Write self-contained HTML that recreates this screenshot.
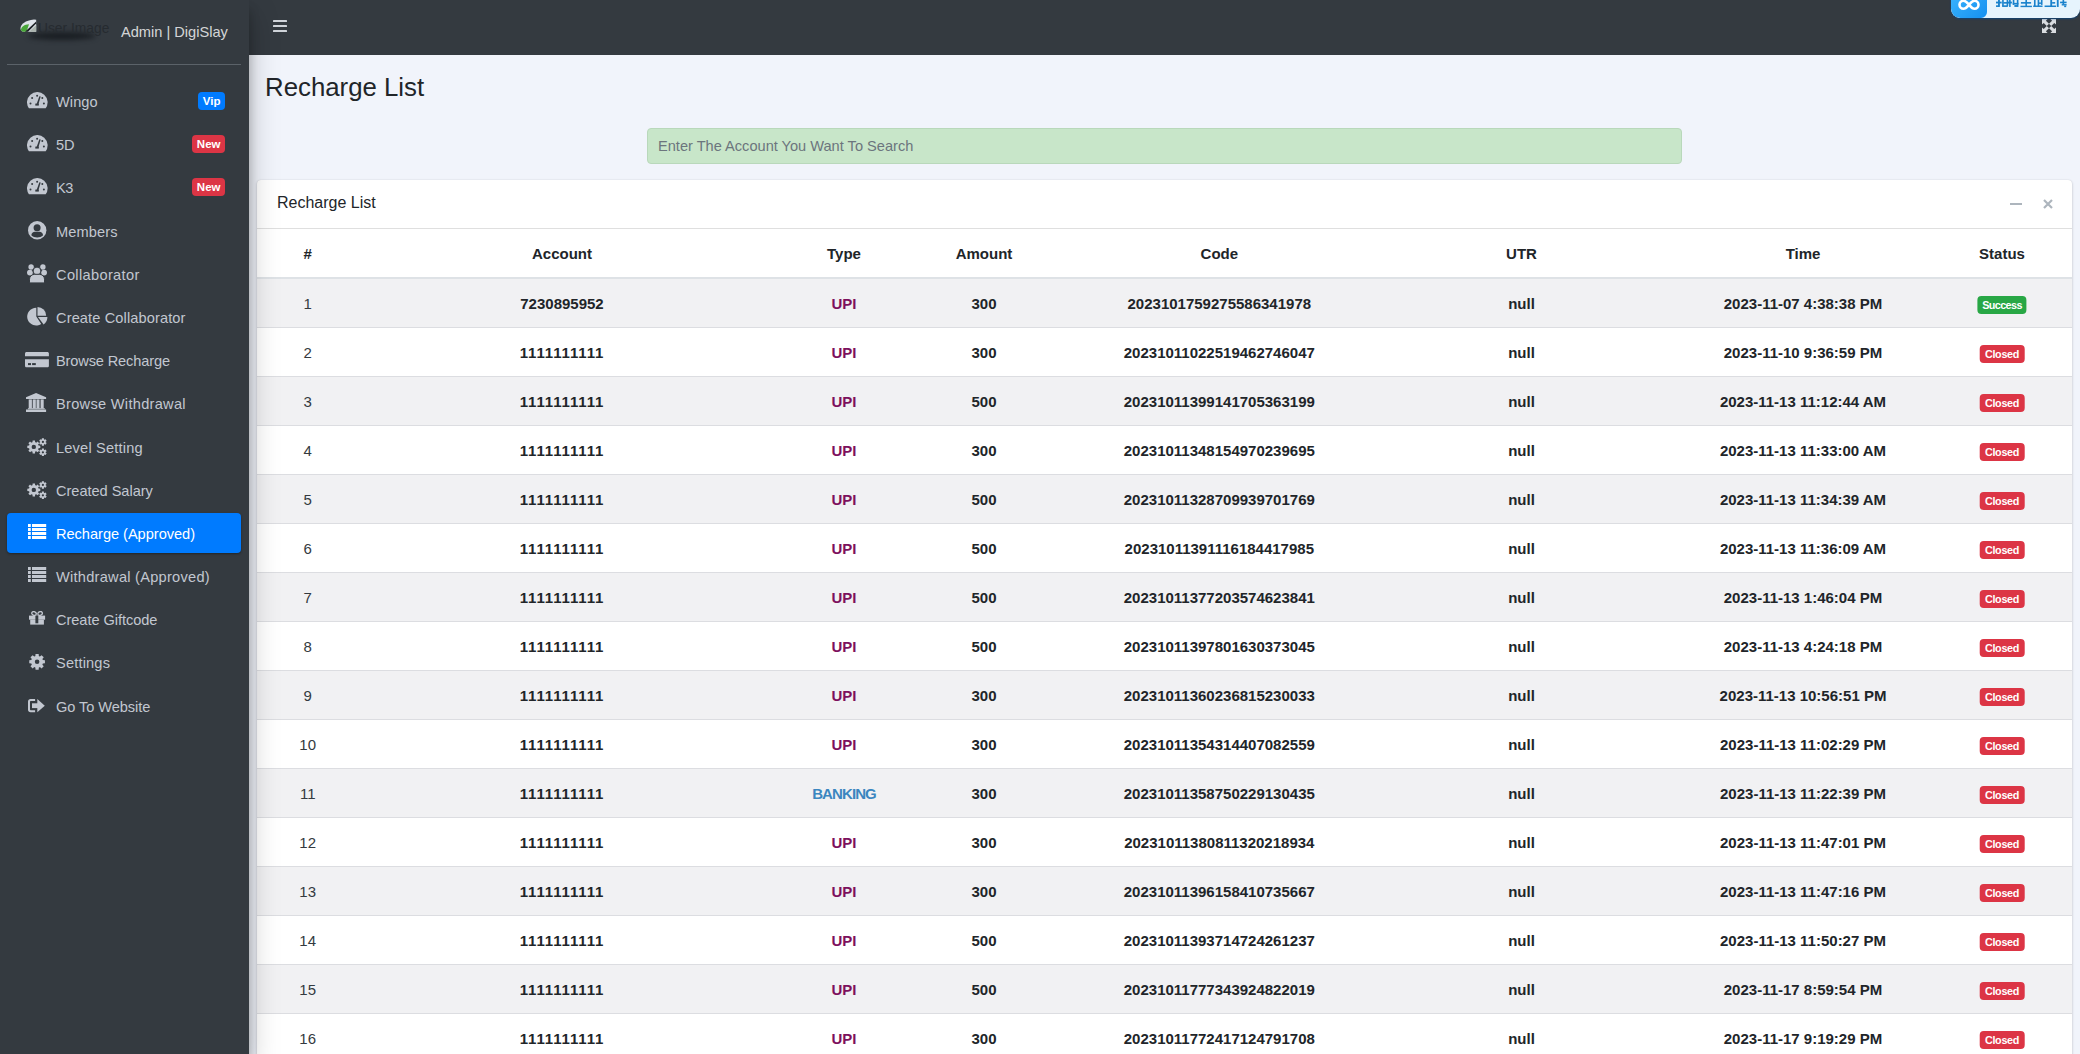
<!DOCTYPE html>
<html><head><meta charset="utf-8"><title>Recharge List</title>
<style>
*{box-sizing:border-box;margin:0;padding:0}
html,body{width:2080px;height:1054px;overflow:hidden}
body{background:#f1f4fb;font-family:"Liberation Sans",sans-serif;color:#212529;position:relative}
.abs{position:absolute}
.sidebar{position:absolute;left:0;top:0;width:249px;height:1054px;background:#343a40;box-shadow:0 14px 28px rgba(0,0,0,.25),0 10px 10px rgba(0,0,0,.22);z-index:5}
.navbar{position:absolute;left:249px;top:0;width:1831px;height:55px;background:#343a40;z-index:4}
.brand-line{position:absolute;left:7px;top:64px;width:234px;height:1px;background:#5b6269}
.nav{position:absolute;left:7px;width:234px;height:40px;border-radius:4px;color:#c2c7d0}
.nav.active{background:#007bff;color:#fff;box-shadow:0 1px 3px rgba(0,0,0,.12),0 1px 2px rgba(0,0,0,.24)}
.nav .ic{position:absolute;display:block}
.nav .ic svg{display:block}
.nav .tx{position:absolute;left:49px;top:1px;line-height:40px;font-size:14.6px;white-space:nowrap;letter-spacing:0.2px}
.badge{position:absolute;right:16px;top:11px;height:18px;line-height:18px;padding:0 4.5px;border-radius:4px;color:#fff;font-weight:bold;font-size:11.5px}
.cell{position:absolute;white-space:nowrap;transform:translateX(-50%);line-height:20px;font-size:15px;font-weight:bold;color:#212529}
.row{position:absolute;left:257px;width:1815px;height:49px;border-top:1px solid #dcdde1}
.row.odd{background:#f1f1f3}
.stat{display:inline-block;height:18px;line-height:18px;border-radius:4px;color:#fff;font-size:10.8px;font-weight:bold;padding:0 5.2px;letter-spacing:-0.3px}
</style></head><body>

<div class="sidebar">
<div class="abs" style="left:28px;top:32px;width:68px;height:8px;border-radius:50%;background:rgba(18,21,25,.75);filter:blur(2.5px)"></div>
<div class="abs" style="left:38px;top:22px;font-size:13.8px;color:#262b30;white-space:nowrap;line-height:14px">User Image</div>
<svg class="abs" style="left:20px;top:19px" width="17" height="13" viewBox="0 0 17 13"><path d="M0.5 9 C1 5 5 1.5 14 0.5 L16.2 0.8 V12.7 H4 C1.5 12.7 0.3 11 0.5 9z" fill="#dfe3ea"/><path d="M1 10.5 C1.5 7.5 4 5.5 9 5.2 L6.5 12.7 H3.5 C1.8 12.7 0.9 11.8 1 10.5z" fill="#49a53a"/><path d="M5 12.7 L16.2 2.5 V4.5 L8 12.7z" fill="#1c2024"/><path d="M9 12.7 L16.2 6 V12.7z" fill="#aab3ad"/></svg>
<div class="abs" style="left:121px;top:22px;font-size:14.6px;color:rgba(255,255,255,.8);white-space:nowrap;line-height:20px">Admin | DigiSlay</div>
<div class="brand-line"></div>
<div class="nav" style="top:81px"><span class="ic" style="left:19.8px;top:10.8px"><svg width="21" height="17" viewBox="0 0 21 17"><path fill="currentColor" d="M1.93 16.3A10.3 10.3 0 1 1 18.67 16.3Z"/><g fill="#343a40"><circle cx="10.1" cy="3.8" r="1"/><circle cx="5.1" cy="6.0" r="1"/><circle cx="15.3" cy="6.0" r="1"/><circle cx="3.5" cy="11.6" r="1"/><circle cx="16.9" cy="11.6" r="1"/><rect x="8.3" y="11.6" width="3.5" height="2" /><path d="M9.4 12.4L12.4 4.2L13.7 4.6L11.2 12.9Z"/></g></svg></span><span class="tx" style="letter-spacing:0.075px">Wingo</span>
<span class="badge" style="background:#007bff">Vip</span>
</div>
<div class="nav" style="top:124px"><span class="ic" style="left:19.8px;top:10.8px"><svg width="21" height="17" viewBox="0 0 21 17"><path fill="currentColor" d="M1.93 16.3A10.3 10.3 0 1 1 18.67 16.3Z"/><g fill="#343a40"><circle cx="10.1" cy="3.8" r="1"/><circle cx="5.1" cy="6.0" r="1"/><circle cx="15.3" cy="6.0" r="1"/><circle cx="3.5" cy="11.6" r="1"/><circle cx="16.9" cy="11.6" r="1"/><rect x="8.3" y="11.6" width="3.5" height="2" /><path d="M9.4 12.4L12.4 4.2L13.7 4.6L11.2 12.9Z"/></g></svg></span><span class="tx" style="letter-spacing:-0.200px">5D</span>
<span class="badge" style="background:#dc3545">New</span>
</div>
<div class="nav" style="top:167px"><span class="ic" style="left:19.8px;top:10.8px"><svg width="21" height="17" viewBox="0 0 21 17"><path fill="currentColor" d="M1.93 16.3A10.3 10.3 0 1 1 18.67 16.3Z"/><g fill="#343a40"><circle cx="10.1" cy="3.8" r="1"/><circle cx="5.1" cy="6.0" r="1"/><circle cx="15.3" cy="6.0" r="1"/><circle cx="3.5" cy="11.6" r="1"/><circle cx="16.9" cy="11.6" r="1"/><rect x="8.3" y="11.6" width="3.5" height="2" /><path d="M9.4 12.4L12.4 4.2L13.7 4.6L11.2 12.9Z"/></g></svg></span><span class="tx" style="letter-spacing:-0.400px">K3</span>
<span class="badge" style="background:#dc3545">New</span>
</div>
<div class="nav" style="top:211px"><span class="ic" style="left:20.8px;top:10.3px"><svg width="19" height="19" viewBox="0 0 19 19"><circle cx="9.2" cy="9.2" r="9.2" fill="currentColor"/><g fill="#343a40"><circle cx="9.1" cy="6.7" r="3.5"/><path d="M3.3 14.3C3.5 12 5 10.7 7 10.7H11.4C13.4 10.7 14.9 12 15.1 14.3C13.6 15.8 11.5 16.5 9.2 16.5C6.9 16.5 4.8 15.8 3.3 14.3Z"/></g></svg></span><span class="tx" style="letter-spacing:0.117px">Members</span>
</div>
<div class="nav" style="top:254px"><span class="ic" style="left:20.0px;top:10.0px"><svg width="20" height="19" viewBox="0 0 20 19"><g fill="currentColor"><circle cx="4.1" cy="3" r="2.7"/><circle cx="15.9" cy="3" r="2.7"/><circle cx="2.9" cy="8.6" r="2.9"/><circle cx="17.1" cy="8.6" r="2.9"/></g><g fill="currentColor" stroke="#343a40" stroke-width="1"><circle cx="10" cy="7" r="3.9"/><path d="M2.5 18.9V15.2C2.5 12.4 5 10.3 7.8 10.3H12.2C15 10.3 17.5 12.4 17.5 15.2V18.9Z"/></g></svg></span><span class="tx" style="letter-spacing:0.345px">Collaborator</span>
</div>
<div class="nav" style="top:297px"><span class="ic" style="left:19.8px;top:9.8px"><svg width="21" height="19" viewBox="0 0 21 19"><g fill="currentColor"><path d="M9.3 9.6V0.8A8.9 8.9 0 1 0 14.2 17.0Z"/><path d="M10.5 8.7V0A8.7 8.7 0 0 1 19.2 8.7Z"/><path d="M11.0 10.0H20.4A9.4 9.4 0 0 1 16.6 17.6Z"/></g></svg></span><span class="tx" style="letter-spacing:0.117px">Create Collaborator</span>
</div>
<div class="nav" style="top:340px"><span class="ic" style="left:18.0px;top:11.8px"><svg width="24" height="16" viewBox="0 0 24 16"><g fill="currentColor"><path d="M0 1.6C0 0.7 0.7 0 1.6 0H22.3C23.2 0 23.9 0.7 23.9 1.6V4.2H0Z"/><path d="M0 7.2H23.9V13.7C23.9 14.6 23.2 15.3 22.3 15.3H1.6C0.7 15.3 0 14.6 0 13.7Z"/></g><g fill="#343a40"><rect x="3" y="11.1" width="3" height="2"/><rect x="7.1" y="11.1" width="3.7" height="2"/></g></svg></span><span class="tx" style="letter-spacing:-0.143px">Browse Recharge</span>
</div>
<div class="nav" style="top:383px"><span class="ic" style="left:19.1px;top:10.1px"><svg width="21" height="19" viewBox="0 0 21 19"><g fill="currentColor"><path d="M10.05 0L20.1 4.3V6H0V4.3Z"/><rect x="2.7" y="6.4" width="3.2" height="9"/><rect x="6.7" y="6.4" width="3.1" height="9"/><rect x="10.5" y="6.4" width="3" height="9"/><rect x="14.6" y="6.4" width="3.1" height="9"/><rect x="1.9" y="15.2" width="16.9" height="1.1"/><rect x="0" y="16.5" width="20.1" height="2.5"/></g></svg></span><span class="tx" style="letter-spacing:0.294px">Browse Withdrawal</span>
</div>
<div class="nav" style="top:427px"><span class="ic" style="left:20.0px;top:10.6px"><svg width="20" height="19" viewBox="0 0 20 19"><path fill="currentColor" fill-rule="evenodd" d="M5.50 4.17 L5.61 2.41 L7.99 2.41 L8.10 4.17 L8.39 4.26 L8.68 4.37 L8.95 4.50 L9.22 4.64 L10.55 3.47 L12.23 5.15 L11.06 6.48 L11.20 6.75 L11.33 7.02 L11.44 7.31 L11.53 7.60 L13.29 7.71 L13.29 10.09 L11.53 10.20 L11.44 10.49 L11.33 10.78 L11.20 11.05 L11.06 11.32 L12.23 12.65 L10.55 14.33 L9.22 13.16 L8.95 13.30 L8.68 13.43 L8.39 13.54 L8.10 13.63 L7.99 15.39 L5.61 15.39 L5.50 13.63 L5.21 13.54 L4.92 13.43 L4.65 13.30 L4.38 13.16 L3.05 14.33 L1.37 12.65 L2.54 11.32 L2.40 11.05 L2.27 10.78 L2.16 10.49 L2.07 10.20 L0.31 10.09 L0.31 7.71 L2.07 7.60 L2.16 7.31 L2.27 7.02 L2.40 6.75 L2.54 6.48 L1.37 5.15 L3.05 3.47 L4.38 4.64 L4.65 4.50 L4.92 4.37 L5.21 4.26Z M4.60 8.90 a2.20 2.20 0 1 0 4.40 0 a2.20 2.20 0 1 0 -4.40 0Z M14.84 1.31 L14.88 0.14 L16.92 0.14 L16.96 1.31 L17.13 1.39 L17.30 1.48 L17.46 1.57 L17.61 1.68 L18.65 1.14 L19.67 2.90 L18.67 3.53 L18.69 3.71 L18.70 3.90 L18.69 4.09 L18.67 4.27 L19.67 4.90 L18.65 6.66 L17.61 6.12 L17.46 6.23 L17.30 6.32 L17.13 6.41 L16.96 6.49 L16.92 7.66 L14.88 7.66 L14.84 6.49 L14.67 6.41 L14.50 6.32 L14.34 6.23 L14.19 6.12 L13.15 6.66 L12.13 4.90 L13.13 4.27 L13.11 4.09 L13.10 3.90 L13.11 3.71 L13.13 3.53 L12.13 2.90 L13.15 1.14 L14.19 1.68 L14.34 1.57 L14.50 1.48 L14.67 1.39Z M14.80 3.90 a1.10 1.10 0 1 0 2.20 0 a1.10 1.10 0 1 0 -2.20 0Z M14.84 11.71 L14.88 10.54 L16.92 10.54 L16.96 11.71 L17.13 11.79 L17.30 11.88 L17.46 11.97 L17.61 12.08 L18.65 11.54 L19.67 13.30 L18.67 13.93 L18.69 14.11 L18.70 14.30 L18.69 14.49 L18.67 14.67 L19.67 15.30 L18.65 17.06 L17.61 16.52 L17.46 16.63 L17.30 16.72 L17.13 16.81 L16.96 16.89 L16.92 18.06 L14.88 18.06 L14.84 16.89 L14.67 16.81 L14.50 16.72 L14.34 16.63 L14.19 16.52 L13.15 17.06 L12.13 15.30 L13.13 14.67 L13.11 14.49 L13.10 14.30 L13.11 14.11 L13.13 13.93 L12.13 13.30 L13.15 11.54 L14.19 12.08 L14.34 11.97 L14.50 11.88 L14.67 11.79Z M14.80 14.30 a1.10 1.10 0 1 0 2.20 0 a1.10 1.10 0 1 0 -2.20 0Z"/></svg></span><span class="tx" style="letter-spacing:0.183px">Level Setting</span>
</div>
<div class="nav" style="top:470px"><span class="ic" style="left:20.0px;top:10.6px"><svg width="20" height="19" viewBox="0 0 20 19"><path fill="currentColor" fill-rule="evenodd" d="M5.50 4.17 L5.61 2.41 L7.99 2.41 L8.10 4.17 L8.39 4.26 L8.68 4.37 L8.95 4.50 L9.22 4.64 L10.55 3.47 L12.23 5.15 L11.06 6.48 L11.20 6.75 L11.33 7.02 L11.44 7.31 L11.53 7.60 L13.29 7.71 L13.29 10.09 L11.53 10.20 L11.44 10.49 L11.33 10.78 L11.20 11.05 L11.06 11.32 L12.23 12.65 L10.55 14.33 L9.22 13.16 L8.95 13.30 L8.68 13.43 L8.39 13.54 L8.10 13.63 L7.99 15.39 L5.61 15.39 L5.50 13.63 L5.21 13.54 L4.92 13.43 L4.65 13.30 L4.38 13.16 L3.05 14.33 L1.37 12.65 L2.54 11.32 L2.40 11.05 L2.27 10.78 L2.16 10.49 L2.07 10.20 L0.31 10.09 L0.31 7.71 L2.07 7.60 L2.16 7.31 L2.27 7.02 L2.40 6.75 L2.54 6.48 L1.37 5.15 L3.05 3.47 L4.38 4.64 L4.65 4.50 L4.92 4.37 L5.21 4.26Z M4.60 8.90 a2.20 2.20 0 1 0 4.40 0 a2.20 2.20 0 1 0 -4.40 0Z M14.84 1.31 L14.88 0.14 L16.92 0.14 L16.96 1.31 L17.13 1.39 L17.30 1.48 L17.46 1.57 L17.61 1.68 L18.65 1.14 L19.67 2.90 L18.67 3.53 L18.69 3.71 L18.70 3.90 L18.69 4.09 L18.67 4.27 L19.67 4.90 L18.65 6.66 L17.61 6.12 L17.46 6.23 L17.30 6.32 L17.13 6.41 L16.96 6.49 L16.92 7.66 L14.88 7.66 L14.84 6.49 L14.67 6.41 L14.50 6.32 L14.34 6.23 L14.19 6.12 L13.15 6.66 L12.13 4.90 L13.13 4.27 L13.11 4.09 L13.10 3.90 L13.11 3.71 L13.13 3.53 L12.13 2.90 L13.15 1.14 L14.19 1.68 L14.34 1.57 L14.50 1.48 L14.67 1.39Z M14.80 3.90 a1.10 1.10 0 1 0 2.20 0 a1.10 1.10 0 1 0 -2.20 0Z M14.84 11.71 L14.88 10.54 L16.92 10.54 L16.96 11.71 L17.13 11.79 L17.30 11.88 L17.46 11.97 L17.61 12.08 L18.65 11.54 L19.67 13.30 L18.67 13.93 L18.69 14.11 L18.70 14.30 L18.69 14.49 L18.67 14.67 L19.67 15.30 L18.65 17.06 L17.61 16.52 L17.46 16.63 L17.30 16.72 L17.13 16.81 L16.96 16.89 L16.92 18.06 L14.88 18.06 L14.84 16.89 L14.67 16.81 L14.50 16.72 L14.34 16.63 L14.19 16.52 L13.15 17.06 L12.13 15.30 L13.13 14.67 L13.11 14.49 L13.10 14.30 L13.11 14.11 L13.13 13.93 L12.13 13.30 L13.15 11.54 L14.19 12.08 L14.34 11.97 L14.50 11.88 L14.67 11.79Z M14.80 14.30 a1.10 1.10 0 1 0 2.20 0 a1.10 1.10 0 1 0 -2.20 0Z"/></svg></span><span class="tx" style="letter-spacing:-0.038px">Created Salary</span>
</div>
<div class="nav active" style="top:513px"><span class="ic" style="left:21.0px;top:11.1px"><svg width="19" height="15" viewBox="0 0 19 15"><g fill="currentColor"><rect x="0" y="0" width="2.8" height="3"/><rect x="4" y="0" width="14.2" height="3"/><rect x="0" y="4" width="2.8" height="3"/><rect x="4" y="4" width="14.2" height="3"/><rect x="0" y="8" width="2.8" height="3"/><rect x="4" y="8" width="14.2" height="3"/><rect x="0" y="12" width="2.8" height="3"/><rect x="4" y="12" width="14.2" height="3"/></g></svg></span><span class="tx" style="letter-spacing:-0.028px">Recharge (Approved)</span>
</div>
<div class="nav" style="top:556px"><span class="ic" style="left:21.0px;top:11.1px"><svg width="19" height="15" viewBox="0 0 19 15"><g fill="currentColor"><rect x="0" y="0" width="2.8" height="3"/><rect x="4" y="0" width="14.2" height="3"/><rect x="0" y="4" width="2.8" height="3"/><rect x="4" y="4" width="14.2" height="3"/><rect x="0" y="8" width="2.8" height="3"/><rect x="4" y="8" width="14.2" height="3"/><rect x="0" y="12" width="2.8" height="3"/><rect x="4" y="12" width="14.2" height="3"/></g></svg></span><span class="tx" style="letter-spacing:0.260px">Withdrawal (Approved)</span>
</div>
<div class="nav" style="top:599px"><span class="ic" style="left:21.8px;top:12.3px"><svg width="17" height="14" viewBox="0 0 17 14"><g fill="currentColor"><rect x="0" y="4.6" width="16.1" height="4.1"/><rect x="1.2" y="8.7" width="13.7" height="4.9"/></g><g fill="none" stroke="currentColor" stroke-width="1.3"><ellipse cx="5" cy="2.5" rx="2.3" ry="1.8" transform="rotate(25 5 2.5)"/><ellipse cx="11.1" cy="2.5" rx="2.3" ry="1.8" transform="rotate(-25 11.1 2.5)"/></g><rect x="6.4" y="4.8" width="2.9" height="7.5" fill="#343a40"/></svg></span><span class="tx" style="letter-spacing:-0.057px">Create Giftcode</span>
</div>
<div class="nav" style="top:642px"><span class="ic" style="left:21.8px;top:11.6px"><svg width="17" height="16" viewBox="0 0 17 16"><path fill="currentColor" fill-rule="evenodd" d="M6.37 2.05 L6.53 -0.04 L9.67 -0.04 L9.83 2.05 L10.11 2.15 L10.40 2.26 L10.67 2.38 L10.94 2.52 L12.53 1.14 L14.76 3.37 L13.38 4.96 L13.52 5.23 L13.64 5.50 L13.75 5.79 L13.85 6.07 L15.94 6.23 L15.94 9.37 L13.85 9.53 L13.75 9.81 L13.64 10.10 L13.52 10.37 L13.38 10.64 L14.76 12.23 L12.53 14.46 L10.94 13.08 L10.67 13.22 L10.40 13.34 L10.11 13.45 L9.83 13.55 L9.67 15.64 L6.53 15.64 L6.37 13.55 L6.09 13.45 L5.80 13.34 L5.53 13.22 L5.26 13.08 L3.67 14.46 L1.44 12.23 L2.82 10.64 L2.68 10.37 L2.56 10.10 L2.45 9.81 L2.35 9.53 L0.26 9.37 L0.26 6.23 L2.35 6.07 L2.45 5.79 L2.56 5.50 L2.68 5.23 L2.82 4.96 L1.44 3.37 L3.67 1.14 L5.26 2.52 L5.53 2.38 L5.80 2.26 L6.09 2.15Z M5.80 7.80 a2.30 2.30 0 1 0 4.60 0 a2.30 2.30 0 1 0 -4.60 0Z"/></svg></span><span class="tx" style="letter-spacing:0.171px">Settings</span>
</div>
<div class="nav" style="top:686px"><span class="ic" style="left:21.0px;top:12.8px"><svg width="17" height="14" viewBox="0 0 17 14"><g fill="currentColor"><path d="M7.1 0H2.5C1.1 0 0 1.1 0 2.5V10.8C0 12.2 1.1 13.3 2.5 13.3H7.1V11.3H3C2.4 11.3 2 10.9 2 10.3V3C2 2.4 2.4 2 3 2H7.1Z"/><rect x="4" y="4.3" width="6" height="4.8"/><path d="M9.3 0L16.8 6.65L9.3 13.3Z"/></g></svg></span><span class="tx" style="letter-spacing:-0.075px">Go To Website</span>
</div>
</div>
<div class="navbar">
<svg class="abs" style="left:24px;top:20px" width="14" height="13" viewBox="0 0 14 13"><g fill="#d0d4da"><rect x="0" y="0" width="14" height="2.1" rx="0.6"/><rect x="0" y="5" width="14" height="2.1" rx="0.6"/><rect x="0" y="10" width="14" height="2.1" rx="0.6"/></g></svg>
</div>
<svg class="abs" style="left:2042px;top:19px;z-index:6" width="14" height="14" viewBox="0 0 14 14"><g fill="#d9dce0"><path d="M0 0H5.6L3.9 1.7L7 4.8L4.8 7L1.7 3.9L0 5.6Z"/><path d="M14 0V5.6L12.3 3.9L9.2 7L7 4.8L10.1 1.7L8.4 0Z"/><path d="M0 14V8.4L1.7 10.1L4.8 7L7 9.2L3.9 12.3L5.6 14Z"/><path d="M14 14H8.4L10.1 12.3L7 9.2L9.2 7L12.3 10.1L14 8.4Z"/></g></svg>
<div class="abs" style="left:1951px;top:-14px;width:129px;height:32px;border-radius:0 0 9px 9px;background:#e6f4fd;box-shadow:0 1px 2px rgba(0,70,140,.7);z-index:7;overflow:hidden"><div class="abs" style="left:0;top:0;width:36px;height:32px;background:linear-gradient(135deg,#3fb8ff,#1590f0);border-radius:0 0 6px 9px"></div><svg class="abs" style="left:7px;top:12.5px" width="22" height="12" viewBox="0 0 22 12"><path d="M5.5 1.8a4 4 0 1 0 0 8c2.3 0 3.6-1.8 5.5-4s3.2-4 5.5-4a4 4 0 1 1 0 8c-2.3 0-3.6-1.8-5.5-4S7.8 1.8 5.5 1.8z" fill="none" stroke="#fff" stroke-width="2.6"/></svg><svg class="abs" style="left:0;top:0" width="129" height="32" viewBox="0 0 129 32"><g fill="#1a82cc"><rect x="45.00" y="15.63" width="5.71" height="1.84"/><rect x="47.04" y="14.00" width="1.84" height="6.94"/><rect x="45.00" y="19.31" width="3.27" height="1.63"/><rect x="51.12" y="14.00" width="1.63" height="6.12"/><rect x="55.61" y="14.00" width="1.63" height="6.12"/><rect x="51.12" y="19.31" width="5.71" height="1.63"/><rect x="52.35" y="16.04" width="4.90" height="1.63"/><rect x="58.06" y="14.00" width="1.63" height="6.94"/><rect x="56.84" y="15.63" width="4.08" height="1.84"/><rect x="61.73" y="14.00" width="1.63" height="4.90"/><rect x="65.82" y="14.00" width="1.63" height="4.90"/><rect x="61.73" y="16.86" width="5.71" height="1.63"/><rect x="63.37" y="18.90" width="4.08" height="2.04"/><rect x="69.90" y="16.04" width="10.20" height="1.63"/><rect x="74.39" y="14.00" width="1.63" height="6.53"/><rect x="69.49" y="19.71" width="11.43" height="1.43"/><rect x="82.96" y="14.00" width="1.63" height="6.53"/><rect x="86.63" y="14.00" width="1.63" height="6.53"/><rect x="89.90" y="14.00" width="1.63" height="4.90"/><rect x="82.14" y="19.51" width="9.39" height="1.43"/><rect x="87.04" y="16.45" width="3.27" height="1.43"/><rect x="99.29" y="14.00" width="1.84" height="6.53"/><rect x="101.12" y="16.04" width="3.06" height="1.63"/><rect x="93.57" y="19.51" width="11.43" height="1.51"/><rect x="105.82" y="14.00" width="1.84" height="6.94"/><rect x="109.08" y="15.63" width="6.53" height="1.63"/><rect x="111.53" y="14.00" width="1.63" height="4.49"/><rect x="110.71" y="18.08" width="4.90" height="1.43"/><rect x="113.16" y="19.51" width="2.04" height="1.63"/></g></svg></div>
<div class="abs" style="left:265px;top:70px;font-size:25.8px;line-height:34px;color:#212529;white-space:nowrap">Recharge List</div>
<div class="abs" style="left:647px;top:128px;width:1035px;height:36px;background:#c8e6c9;border:1px solid #b9d8bb;border-radius:4px"></div>
<div class="abs" style="left:658px;top:137px;font-size:14.6px;line-height:18px;color:#6c757d;white-space:nowrap">Enter The Account You Want To Search</div>
<div class="abs" style="left:257px;top:180px;width:1815px;height:900px;background:#fff;border-radius:4px;box-shadow:0 0 1px rgba(0,0,0,.125),0 1px 3px rgba(0,0,0,.2)"></div>
<div class="abs" style="left:257px;top:228px;width:1815px;height:1px;background:rgba(0,0,0,.125)"></div>
<div class="abs" style="left:277px;top:193px;font-size:16px;line-height:20px;color:#212529;white-space:nowrap">Recharge List</div>
<div class="abs" style="left:2010px;top:203px;width:12px;height:2px;background:#adb5bd"></div>
<svg class="abs" style="left:2043px;top:199px" width="10" height="10" viewBox="0 0 10 10"><path d="M1 1L9 9M9 1L1 9" stroke="#adb5bd" stroke-width="2.2"/></svg>
<div class="abs" style="left:257px;top:277px;width:1815px;height:2px;background:#dee2e6"></div>
<div class="cell" style="left:307.7px;top:244px">#</div>
<div class="cell" style="left:562.0px;top:244px">Account</div>
<div class="cell" style="left:844.0px;top:244px">Type</div>
<div class="cell" style="left:984.0px;top:244px">Amount</div>
<div class="cell" style="left:1219.3px;top:244px">Code</div>
<div class="cell" style="left:1521.5px;top:244px">UTR</div>
<div class="cell" style="left:1803.0px;top:244px">Time</div>
<div class="cell" style="left:2002.0px;top:244px">Status</div>
<div class="row odd" style="top:279px;border-top:0;height:48px"></div>
<div class="cell" style="left:307.7px;top:294px;font-weight:normal;color:#343a40;">1</div>
<div class="cell" style="left:562.0px;top:294px;">7230895952</div>
<div class="cell" style="left:844.0px;top:294px;color:#7d105d;">UPI</div>
<div class="cell" style="left:984.0px;top:294px;">300</div>
<div class="cell" style="left:1219.3px;top:294px;">2023101759275586341978</div>
<div class="cell" style="left:1521.5px;top:294px;">null</div>
<div class="cell" style="left:1803.0px;top:294px;">2023-11-07 4:38:38 PM</div>
<div class="cell" style="left:2002.0px;top:295px;line-height:18px;"><span class="stat" style="background:#28a745;letter-spacing:-0.6px;padding:0 4.8px">Success</span></div>
<div class="row" style="top:327px"></div>
<div class="cell" style="left:307.7px;top:343px;font-weight:normal;color:#343a40;">2</div>
<div class="cell" style="left:562.0px;top:343px;letter-spacing:0.85px;">1111111111</div>
<div class="cell" style="left:844.0px;top:343px;color:#7d105d;">UPI</div>
<div class="cell" style="left:984.0px;top:343px;">300</div>
<div class="cell" style="left:1219.3px;top:343px;">20231011022519462746047</div>
<div class="cell" style="left:1521.5px;top:343px;">null</div>
<div class="cell" style="left:1803.0px;top:343px;">2023-11-10 9:36:59 PM</div>
<div class="cell" style="left:2002.0px;top:344px;line-height:18px;"><span class="stat" style="background:#dc3545">Closed</span></div>
<div class="row odd" style="top:376px"></div>
<div class="cell" style="left:307.7px;top:392px;font-weight:normal;color:#343a40;">3</div>
<div class="cell" style="left:562.0px;top:392px;letter-spacing:0.85px;">1111111111</div>
<div class="cell" style="left:844.0px;top:392px;color:#7d105d;">UPI</div>
<div class="cell" style="left:984.0px;top:392px;">500</div>
<div class="cell" style="left:1219.3px;top:392px;">20231011399141705363199</div>
<div class="cell" style="left:1521.5px;top:392px;">null</div>
<div class="cell" style="left:1803.0px;top:392px;">2023-11-13 11:12:44 AM</div>
<div class="cell" style="left:2002.0px;top:393px;line-height:18px;"><span class="stat" style="background:#dc3545">Closed</span></div>
<div class="row" style="top:425px"></div>
<div class="cell" style="left:307.7px;top:441px;font-weight:normal;color:#343a40;">4</div>
<div class="cell" style="left:562.0px;top:441px;letter-spacing:0.85px;">1111111111</div>
<div class="cell" style="left:844.0px;top:441px;color:#7d105d;">UPI</div>
<div class="cell" style="left:984.0px;top:441px;">300</div>
<div class="cell" style="left:1219.3px;top:441px;">20231011348154970239695</div>
<div class="cell" style="left:1521.5px;top:441px;">null</div>
<div class="cell" style="left:1803.0px;top:441px;">2023-11-13 11:33:00 AM</div>
<div class="cell" style="left:2002.0px;top:442px;line-height:18px;"><span class="stat" style="background:#dc3545">Closed</span></div>
<div class="row odd" style="top:474px"></div>
<div class="cell" style="left:307.7px;top:490px;font-weight:normal;color:#343a40;">5</div>
<div class="cell" style="left:562.0px;top:490px;letter-spacing:0.85px;">1111111111</div>
<div class="cell" style="left:844.0px;top:490px;color:#7d105d;">UPI</div>
<div class="cell" style="left:984.0px;top:490px;">500</div>
<div class="cell" style="left:1219.3px;top:490px;">20231011328709939701769</div>
<div class="cell" style="left:1521.5px;top:490px;">null</div>
<div class="cell" style="left:1803.0px;top:490px;">2023-11-13 11:34:39 AM</div>
<div class="cell" style="left:2002.0px;top:491px;line-height:18px;"><span class="stat" style="background:#dc3545">Closed</span></div>
<div class="row" style="top:523px"></div>
<div class="cell" style="left:307.7px;top:539px;font-weight:normal;color:#343a40;">6</div>
<div class="cell" style="left:562.0px;top:539px;letter-spacing:0.85px;">1111111111</div>
<div class="cell" style="left:844.0px;top:539px;color:#7d105d;">UPI</div>
<div class="cell" style="left:984.0px;top:539px;">500</div>
<div class="cell" style="left:1219.3px;top:539px;">20231011391116184417985</div>
<div class="cell" style="left:1521.5px;top:539px;">null</div>
<div class="cell" style="left:1803.0px;top:539px;">2023-11-13 11:36:09 AM</div>
<div class="cell" style="left:2002.0px;top:540px;line-height:18px;"><span class="stat" style="background:#dc3545">Closed</span></div>
<div class="row odd" style="top:572px"></div>
<div class="cell" style="left:307.7px;top:588px;font-weight:normal;color:#343a40;">7</div>
<div class="cell" style="left:562.0px;top:588px;letter-spacing:0.85px;">1111111111</div>
<div class="cell" style="left:844.0px;top:588px;color:#7d105d;">UPI</div>
<div class="cell" style="left:984.0px;top:588px;">500</div>
<div class="cell" style="left:1219.3px;top:588px;">20231011377203574623841</div>
<div class="cell" style="left:1521.5px;top:588px;">null</div>
<div class="cell" style="left:1803.0px;top:588px;">2023-11-13 1:46:04 PM</div>
<div class="cell" style="left:2002.0px;top:589px;line-height:18px;"><span class="stat" style="background:#dc3545">Closed</span></div>
<div class="row" style="top:621px"></div>
<div class="cell" style="left:307.7px;top:637px;font-weight:normal;color:#343a40;">8</div>
<div class="cell" style="left:562.0px;top:637px;letter-spacing:0.85px;">1111111111</div>
<div class="cell" style="left:844.0px;top:637px;color:#7d105d;">UPI</div>
<div class="cell" style="left:984.0px;top:637px;">500</div>
<div class="cell" style="left:1219.3px;top:637px;">20231011397801630373045</div>
<div class="cell" style="left:1521.5px;top:637px;">null</div>
<div class="cell" style="left:1803.0px;top:637px;">2023-11-13 4:24:18 PM</div>
<div class="cell" style="left:2002.0px;top:638px;line-height:18px;"><span class="stat" style="background:#dc3545">Closed</span></div>
<div class="row odd" style="top:670px"></div>
<div class="cell" style="left:307.7px;top:686px;font-weight:normal;color:#343a40;">9</div>
<div class="cell" style="left:562.0px;top:686px;letter-spacing:0.85px;">1111111111</div>
<div class="cell" style="left:844.0px;top:686px;color:#7d105d;">UPI</div>
<div class="cell" style="left:984.0px;top:686px;">300</div>
<div class="cell" style="left:1219.3px;top:686px;">20231011360236815230033</div>
<div class="cell" style="left:1521.5px;top:686px;">null</div>
<div class="cell" style="left:1803.0px;top:686px;">2023-11-13 10:56:51 PM</div>
<div class="cell" style="left:2002.0px;top:687px;line-height:18px;"><span class="stat" style="background:#dc3545">Closed</span></div>
<div class="row" style="top:719px"></div>
<div class="cell" style="left:307.7px;top:735px;font-weight:normal;color:#343a40;">10</div>
<div class="cell" style="left:562.0px;top:735px;letter-spacing:0.85px;">1111111111</div>
<div class="cell" style="left:844.0px;top:735px;color:#7d105d;">UPI</div>
<div class="cell" style="left:984.0px;top:735px;">300</div>
<div class="cell" style="left:1219.3px;top:735px;">20231011354314407082559</div>
<div class="cell" style="left:1521.5px;top:735px;">null</div>
<div class="cell" style="left:1803.0px;top:735px;">2023-11-13 11:02:29 PM</div>
<div class="cell" style="left:2002.0px;top:736px;line-height:18px;"><span class="stat" style="background:#dc3545">Closed</span></div>
<div class="row odd" style="top:768px"></div>
<div class="cell" style="left:307.7px;top:784px;font-weight:normal;color:#343a40;">11</div>
<div class="cell" style="left:562.0px;top:784px;letter-spacing:0.85px;">1111111111</div>
<div class="cell" style="left:844.0px;top:784px;color:#3b86c0;letter-spacing:-0.9px;">BANKING</div>
<div class="cell" style="left:984.0px;top:784px;">300</div>
<div class="cell" style="left:1219.3px;top:784px;">20231011358750229130435</div>
<div class="cell" style="left:1521.5px;top:784px;">null</div>
<div class="cell" style="left:1803.0px;top:784px;">2023-11-13 11:22:39 PM</div>
<div class="cell" style="left:2002.0px;top:785px;line-height:18px;"><span class="stat" style="background:#dc3545">Closed</span></div>
<div class="row" style="top:817px"></div>
<div class="cell" style="left:307.7px;top:833px;font-weight:normal;color:#343a40;">12</div>
<div class="cell" style="left:562.0px;top:833px;letter-spacing:0.85px;">1111111111</div>
<div class="cell" style="left:844.0px;top:833px;color:#7d105d;">UPI</div>
<div class="cell" style="left:984.0px;top:833px;">300</div>
<div class="cell" style="left:1219.3px;top:833px;">20231011380811320218934</div>
<div class="cell" style="left:1521.5px;top:833px;">null</div>
<div class="cell" style="left:1803.0px;top:833px;">2023-11-13 11:47:01 PM</div>
<div class="cell" style="left:2002.0px;top:834px;line-height:18px;"><span class="stat" style="background:#dc3545">Closed</span></div>
<div class="row odd" style="top:866px"></div>
<div class="cell" style="left:307.7px;top:882px;font-weight:normal;color:#343a40;">13</div>
<div class="cell" style="left:562.0px;top:882px;letter-spacing:0.85px;">1111111111</div>
<div class="cell" style="left:844.0px;top:882px;color:#7d105d;">UPI</div>
<div class="cell" style="left:984.0px;top:882px;">300</div>
<div class="cell" style="left:1219.3px;top:882px;">20231011396158410735667</div>
<div class="cell" style="left:1521.5px;top:882px;">null</div>
<div class="cell" style="left:1803.0px;top:882px;">2023-11-13 11:47:16 PM</div>
<div class="cell" style="left:2002.0px;top:883px;line-height:18px;"><span class="stat" style="background:#dc3545">Closed</span></div>
<div class="row" style="top:915px"></div>
<div class="cell" style="left:307.7px;top:931px;font-weight:normal;color:#343a40;">14</div>
<div class="cell" style="left:562.0px;top:931px;letter-spacing:0.85px;">1111111111</div>
<div class="cell" style="left:844.0px;top:931px;color:#7d105d;">UPI</div>
<div class="cell" style="left:984.0px;top:931px;">500</div>
<div class="cell" style="left:1219.3px;top:931px;">20231011393714724261237</div>
<div class="cell" style="left:1521.5px;top:931px;">null</div>
<div class="cell" style="left:1803.0px;top:931px;">2023-11-13 11:50:27 PM</div>
<div class="cell" style="left:2002.0px;top:932px;line-height:18px;"><span class="stat" style="background:#dc3545">Closed</span></div>
<div class="row odd" style="top:964px"></div>
<div class="cell" style="left:307.7px;top:980px;font-weight:normal;color:#343a40;">15</div>
<div class="cell" style="left:562.0px;top:980px;letter-spacing:0.85px;">1111111111</div>
<div class="cell" style="left:844.0px;top:980px;color:#7d105d;">UPI</div>
<div class="cell" style="left:984.0px;top:980px;">500</div>
<div class="cell" style="left:1219.3px;top:980px;">20231011777343924822019</div>
<div class="cell" style="left:1521.5px;top:980px;">null</div>
<div class="cell" style="left:1803.0px;top:980px;">2023-11-17 8:59:54 PM</div>
<div class="cell" style="left:2002.0px;top:981px;line-height:18px;"><span class="stat" style="background:#dc3545">Closed</span></div>
<div class="row" style="top:1013px"></div>
<div class="cell" style="left:307.7px;top:1029px;font-weight:normal;color:#343a40;">16</div>
<div class="cell" style="left:562.0px;top:1029px;letter-spacing:0.85px;">1111111111</div>
<div class="cell" style="left:844.0px;top:1029px;color:#7d105d;">UPI</div>
<div class="cell" style="left:984.0px;top:1029px;">300</div>
<div class="cell" style="left:1219.3px;top:1029px;">20231011772417124791708</div>
<div class="cell" style="left:1521.5px;top:1029px;">null</div>
<div class="cell" style="left:1803.0px;top:1029px;">2023-11-17 9:19:29 PM</div>
<div class="cell" style="left:2002.0px;top:1030px;line-height:18px;"><span class="stat" style="background:#dc3545">Closed</span></div>
</body></html>
